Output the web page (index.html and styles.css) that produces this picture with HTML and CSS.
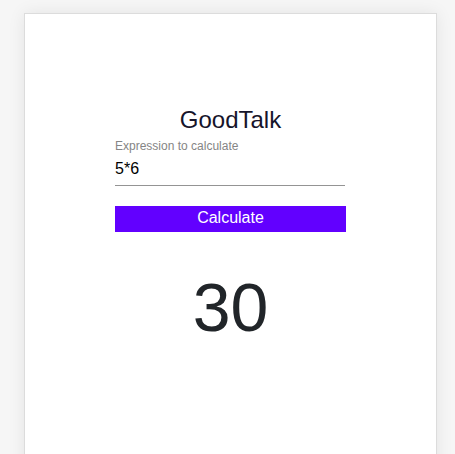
FILE: index.html
```html
<!DOCTYPE html>
<html lang="en">
<head>
<meta charset="utf-8">
<title>GoodTalk</title>
<link rel="stylesheet" href="styles.css">
</head>
<body>
<main class="card">
  <form class="calc">
    <h1 class="title">GoodTalk</h1>
    <label class="field-label" for="expr">Expression to calculate</label>
    <input class="field-input" id="expr" type="text" value="5*6">
    <button class="calc-button" type="button">Calculate</button>
  </form>
  <div class="result">30</div>
</main>
</body>
</html>
```
FILE: styles.css
```css
html, body {
  margin: 0;
  padding: 0;
  height: 100%;
  overflow: hidden;
}
body {
  background: #f6f6f6;
  font-family: "Liberation Sans", Arial, sans-serif;
  padding: 13px 18px 0 24px;
  box-sizing: border-box;
}
.card {
  background: #ffffff;
  border: 1px solid #dcdcdc;
  box-shadow: 0 0 16px rgba(0, 0, 0, 0.08);
  min-height: 520px;
  box-sizing: border-box;
  display: flex;
  flex-direction: column;
  align-items: center;
  padding-top: 92px;
}
.calc {
  width: 231px;
  display: flex;
  flex-direction: column;
}
.title {
  margin: 0;
  font-size: 24px;
  line-height: 28px;
  font-weight: 400;
  color: #16142a;
  text-align: center;
}
.field-label {
  margin-top: 5px;
  font-size: 12px;
  line-height: 14px;
  color: #858585;
}
.field-input {
  display: block;
  width: 230px;
  box-sizing: border-box;
  margin: 0;
  padding: 6px 0;
  border: none;
  border-bottom: 1px solid #949494;
  font-family: "Liberation Sans", Arial, sans-serif;
  font-size: 16px;
  line-height: 20px;
  height: 33px;
  color: #000;
  background: transparent;
  outline: none;
}
.calc-button {
  margin-top: 20px;
  width: 231px;
  height: 26px;
  padding: 2px 0 4px;
  border: none;
  background: #6200ff;
  color: #ffffff;
  font-family: "Liberation Sans", Arial, sans-serif;
  font-size: 16px;
  line-height: 20px;
  cursor: pointer;
}
.result {
  margin-top: 41px;
  font-size: 68px;
  line-height: 68px;
  color: #212529;
}
```
